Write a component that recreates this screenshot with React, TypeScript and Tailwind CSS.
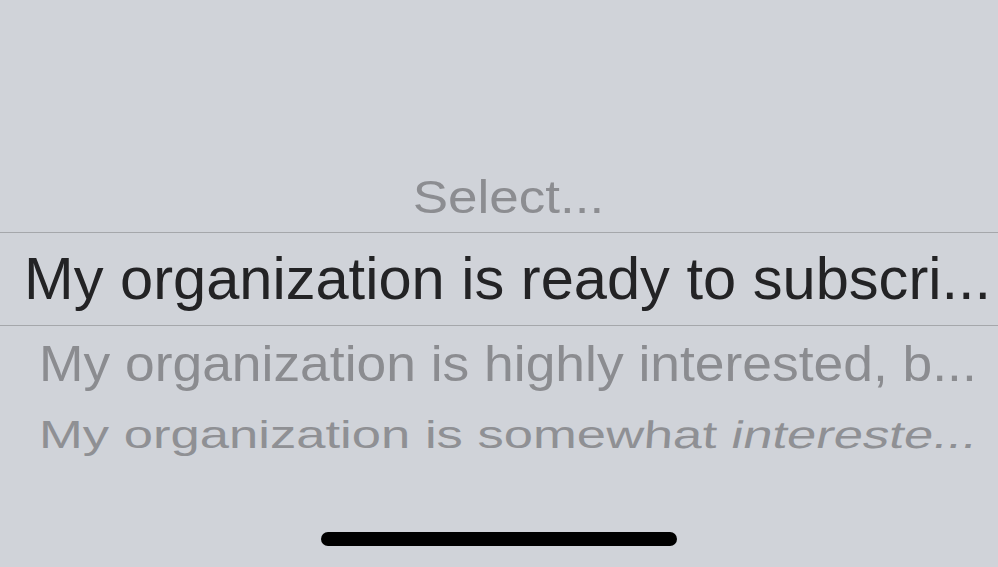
import React from "react";

export default function App() {
  const font = { fontFamily: '"Liberation Sans", Arial, sans-serif' };
  return (
    <div
      className="w-[998px] h-[567px] overflow-hidden bg-[#d0d3d9] flex flex-col"
      style={font}
    >
      <div className="h-[160px] shrink-0" />
      <div className="h-[72px] shrink-0 flex items-center justify-center pl-[19px]">
        <span className="text-[53px] leading-none text-[#8c8d91] scale-y-[0.87] inline-block whitespace-nowrap">
          Select...
        </span>
      </div>
      <div className="h-px shrink-0 bg-[#a5a7ab]" />
      <div className="h-[92px] shrink-0 flex items-center pl-[24px]">
        <span className="text-[59.6px] leading-none text-[#232325] inline-block whitespace-nowrap">
          My organization is ready to subscri...
        </span>
      </div>
      <div className="h-px shrink-0 bg-[#a5a7ab]" />
      <div className="h-[76px] shrink-0 flex items-center pl-[39px]">
        <span className="text-[53.4px] leading-none text-[#8b8c90] scale-y-[0.95] inline-block whitespace-nowrap">
          My organization is highly interested, b...
        </span>
      </div>
      <div className="h-[67px] shrink-0 flex items-center pl-[39px]">
        <span className="text-[52.6px] leading-none text-[#8f9094] scale-y-[0.73] inline-block whitespace-nowrap">
          My organization is some
          <span className="inline-block -skew-x-3">what</span>{" "}
          <span className="inline-block -skew-x-[9deg]">intereste...</span>
        </span>
      </div>
      <div className="h-[63px] shrink-0" />
      <div className="flex justify-center">
        <div className="w-[356px] h-[14px] rounded-full bg-black" />
      </div>
    </div>
  );
}
